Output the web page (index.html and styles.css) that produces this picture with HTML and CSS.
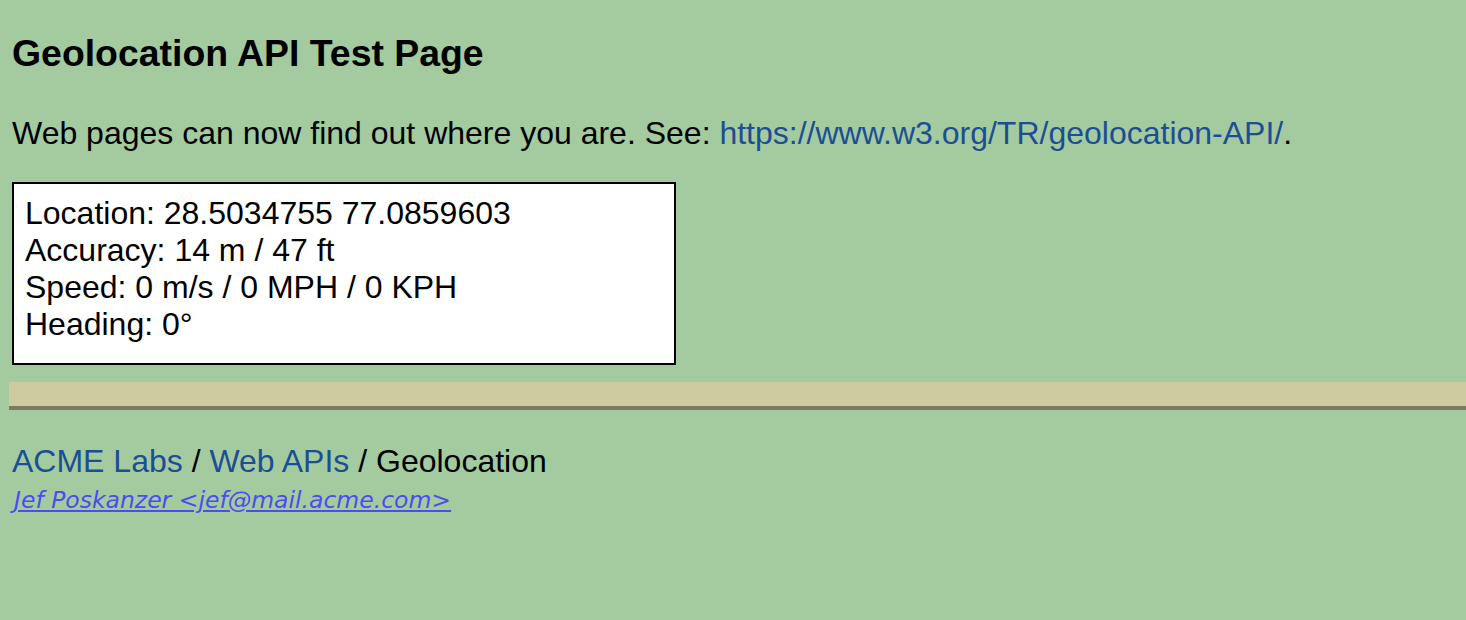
FILE: index.html
```html
<!DOCTYPE html>
<html>
<head>
<meta charset="utf-8">
<title>Geolocation API Test Page</title>
<link rel="stylesheet" href="styles.css">
</head>
<body>
<h1 class="title">Geolocation API Test Page</h1>
<p class="intro">Web pages can now find out where you are. See: <a class="link" href="#">https://www.w3.org/TR/geolocation-API/</a>.</p>
<div class="status">
  <div class="line">Location: 28.5034755 77.0859603</div>
  <div class="line">Accuracy: 14 m / 47 ft</div>
  <div class="line">Speed: 0 m/s / 0 MPH / 0 KPH</div>
  <div class="line">Heading: 0°</div>
</div>
<div class="bar"></div>
<div class="crumbs"><a class="link" href="#">ACME Labs</a> / <a class="link" href="#">Web APIs</a> / Geolocation</div>
<div class="author"><a class="mail" href="#">Jef Poskanzer &lt;jef@mail.acme.com&gt;</a></div>
</body>
</html>
```
FILE: styles.css
```css
html, body {
  margin: 0;
  padding: 0;
  background: #a3cb9f;
}
body {
  padding: 0 0 0 12px;
  font-family: "Liberation Sans", Arial, sans-serif;
  color: #000;
}
.title {
  margin: 32px 0 0;
  font-size: 37.4px;
  line-height: 43px;
  font-weight: bold;
}
.intro {
  margin: 40px 0 0;
  font-size: 32px;
  line-height: 37px;
}
.link {
  color: #1d4e94;
  text-decoration: none;
}
.status {
  margin-top: 30px;
  width: 638px;
  border: 2px solid #000;
  background: #fff;
  padding: 11px 11px 20px;
  font-size: 32px;
  line-height: 37px;
}
.bar {
  margin: 17px 0 0 -3px;
  height: 24px;
  background: #cdcb9f;
  border-bottom: 4px solid #7b7b62;
}
.crumbs {
  margin-top: 33px;
  font-size: 32px;
  line-height: 37px;
}
.author {
  margin-top: 7px;
  font-family: "DejaVu Sans", sans-serif;
  font-style: italic;
  font-size: 23.5px;
  line-height: 27px;
  padding-left: 2px;
}
.mail {
  color: #4c4cf0;
  text-decoration: underline;
}
```
